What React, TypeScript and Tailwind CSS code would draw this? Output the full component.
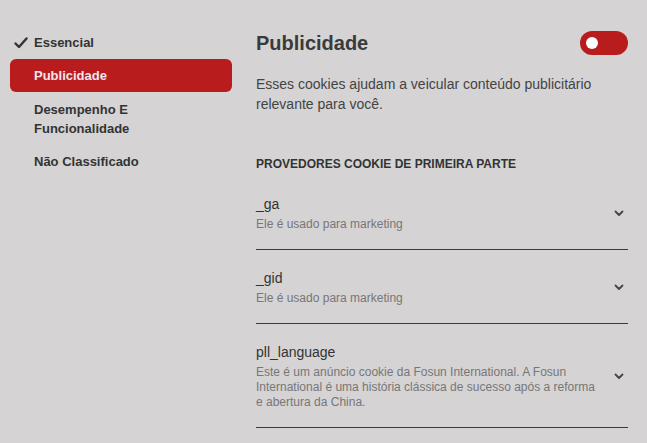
import React from "react";

const font = { fontFamily: '"Liberation Sans", Arial, sans-serif' };

function Chevron() {
  return (
    <svg width="10" height="7" viewBox="0 0 10 7" fill="none">
      <path d="M1.5 1.5 L5 5 L8.5 1.5" stroke="#444" strokeWidth="1.8" strokeLinecap="round" strokeLinejoin="round" />
    </svg>
  );
}

const items = [
  { name: "_ga", desc: "Ele é usado para marketing" },
  { name: "_gid", desc: "Ele é usado para marketing" },
  {
    name: "pll_language",
    desc: "Este é um anúncio cookie da Fosun International. A Fosun International é uma história clássica de sucesso após a reforma e abertura da China.",
  },
];

export default function App() {
  return (
    <div className="w-[647px] h-[443px] bg-[#d5d3d4] flex overflow-hidden" style={font}>
      <div className="w-[232px] pl-[10px] pt-[26px] shrink-0">
        <div className="flex items-center h-[33px] pl-[4px] gap-[6px] text-[13px] font-bold text-[#333]">
          <svg width="14" height="12" viewBox="0 0 14 12" fill="none">
            <path d="M1.5 6.5 L5 10 L12.5 1.5" stroke="#333" strokeWidth="2.4" strokeLinecap="round" strokeLinejoin="round" />
          </svg>
          <span>Essencial</span>
        </div>
        <div className="flex items-center h-[33px] pl-[24px] rounded-[6px] bg-[#b91c1c] text-[13px] font-bold text-[#f3e6ee]">
          Publicidade
        </div>
        <div className="pl-[24px] py-[8px] text-[13px] leading-[19px] font-bold text-[#333]">
          Desempenho E<br />Funcionalidade
        </div>
        <div className="flex items-center h-[31px] pl-[24px] text-[13px] font-bold text-[#333]">
          Não Classificado
        </div>
      </div>
      <div className="ml-[24px] w-[372px] pt-[31px]">
        <div className="flex items-center justify-between h-[24px]">
          <div className="text-[20px] font-bold text-[#3a3a3a]">Publicidade</div>
          <div className="w-[48px] h-[24px] rounded-full bg-[#b91c1c] flex items-center pl-[6px]">
            <div className="w-[12px] h-[12px] rounded-full bg-white" />
          </div>
        </div>
        <div className="mt-[19px] text-[14px] leading-[20px] text-[#444]">
          Esses cookies ajudam a veicular conteúdo publicitário relevante para você.
        </div>
        <div className="mt-[42px] text-[12px] leading-[16px] font-bold text-[#333] uppercase">
          Provedores cookie de primeira parte
        </div>
        <div className="mt-[4px]">
          {items.map((it) => (
            <div key={it.name} className="flex items-center pt-[19px] pb-[17px] border-b border-[#3a3a3a]">
              <div className="w-[346px]">
                <div className="text-[14px] leading-[18px] text-[#333]">{it.name}</div>
                <div className="mt-[4px] text-[12px] leading-[15px] text-[#777]">{it.desc}</div>
              </div>
              <div className="flex-1 flex justify-end pr-[4px]">
                <Chevron />
              </div>
            </div>
          ))}
        </div>
      </div>
    </div>
  );
}
